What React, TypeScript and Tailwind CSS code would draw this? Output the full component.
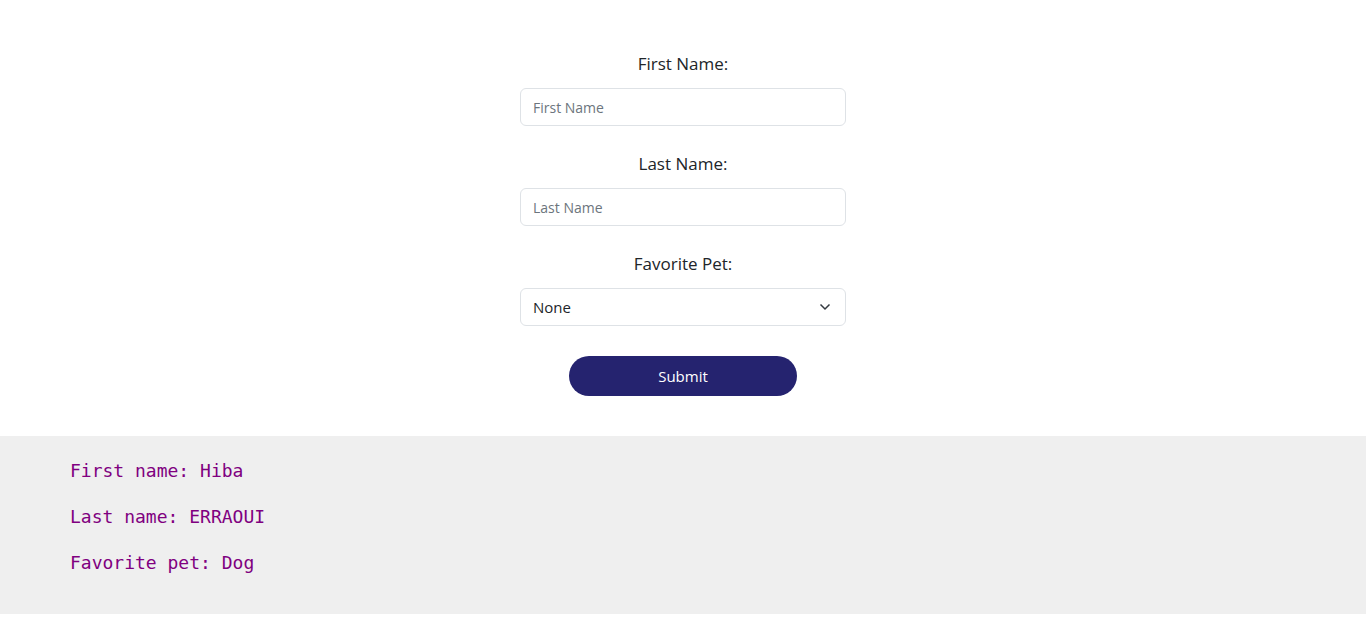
import { useState } from "react";

const PETS = ["None", "Dog", "Cat", "Bird", "Fish"];

export default function App() {
  const [firstName, setFirstName] = useState("");
  const [lastName, setLastName] = useState("");
  const [pet, setPet] = useState("None");

  return (
    <div className="bg-white font-['Open_Sans','Noto_Sans',sans-serif] text-[#212529]">
      <form
        className="flex flex-col items-center pt-[52px] pb-10"
        onSubmit={(e) => e.preventDefault()}
      >
        <label className="text-[17px] leading-6">First Name:</label>
        <input
          className="mt-3 w-[326px] h-[38px] px-3 border border-[#dee2e6] rounded-[6px] text-[14px] placeholder:text-[#6c757d] outline-none"
          placeholder="First Name"
          value={firstName}
          onChange={(e) => setFirstName(e.target.value)}
        />
        <label className="mt-[26px] text-[17px] leading-6">Last Name:</label>
        <input
          className="mt-3 w-[326px] h-[38px] px-3 border border-[#dee2e6] rounded-[6px] text-[14px] placeholder:text-[#6c757d] outline-none"
          placeholder="Last Name"
          value={lastName}
          onChange={(e) => setLastName(e.target.value)}
        />
        <label className="mt-[26px] text-[17px] leading-6">Favorite Pet:</label>
        <div className="relative mt-3 w-[326px]">
          <select
            className="appearance-none w-full h-[38px] px-3 border border-[#dee2e6] rounded-[6px] text-[15px] bg-white outline-none"
            value={pet}
            onChange={(e) => setPet(e.target.value)}
          >
            {PETS.map((p) => (
              <option key={p} value={p}>
                {p}
              </option>
            ))}
          </select>
          <svg
            className="absolute right-[15px] top-[14px] pointer-events-none"
            width="12"
            height="9"
            viewBox="0 0 12 9"
            fill="none"
            stroke="#343a40"
            strokeWidth="1.5"
          >
            <path d="M1.5 2.5 6 7l4.5-4.5" />
          </svg>
        </div>
        <button
          type="submit"
          className="mt-[30px] w-[228px] h-10 rounded-full bg-[#25236f] text-white text-[15px]"
        >
          Submit
        </button>
      </form>
      <div className="bg-[#efefef] pl-[70px] pt-[22px] pb-[38px] font-['DejaVu_Sans_Mono','Liberation_Mono',monospace] text-[18px] text-[#800080]">
        <p className="leading-[26px]">First name: Hiba</p>
        <p className="mt-5 leading-[26px]">Last name: ERRAOUI</p>
        <p className="mt-5 leading-[26px]">Favorite pet: Dog</p>
      </div>
    </div>
  );
}
